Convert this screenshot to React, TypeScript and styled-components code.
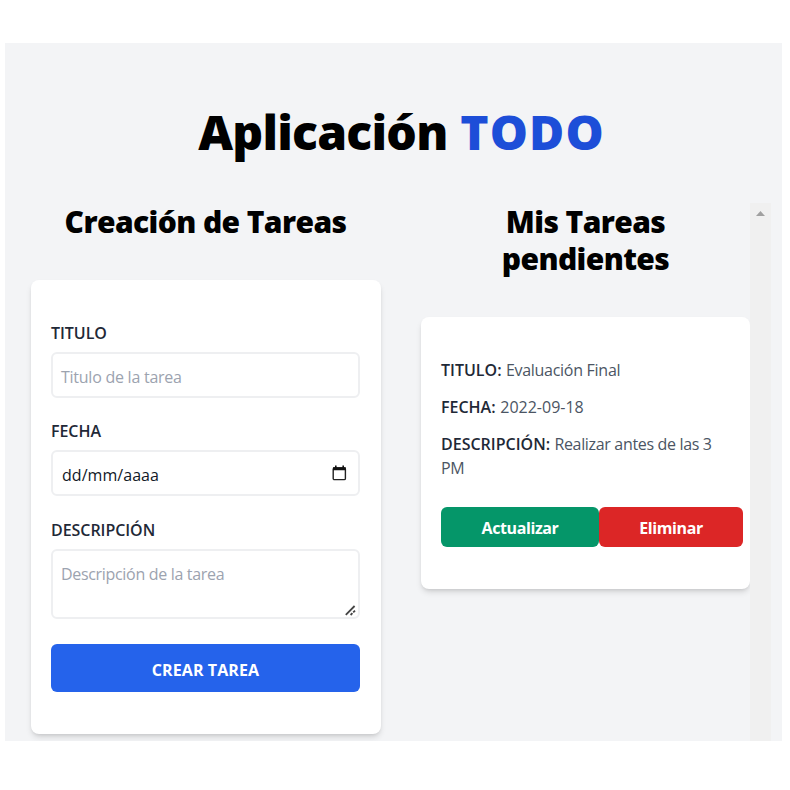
import React from "react";
import styled, { createGlobalStyle } from "styled-components";

const GlobalStyle = createGlobalStyle`
  *, *::before, *::after { box-sizing: border-box; }
  body {
    margin: 0;
    background: #ffffff;
    font-family: "Open Sans", "Noto Sans", sans-serif;
    font-size: 16px;
    line-height: 24px;
    color: #1f2937;
  }
  h1, h2, p { margin: 0; }
`;

const Page = styled.div`
  height: 790px;
  padding: 43px 8px 49px 5px;
  overflow: hidden;
`;

const Panel = styled.main`
  height: 698px;
  padding-top: 64px;
  background: #f3f4f6;
  overflow: hidden;
`;

const Title = styled.h1`
  height: 96px;
  padding-left: 16px;
  text-align: center;
  font-size: 48px;
  line-height: 49px;
  font-weight: 800;
  letter-spacing: -0.75px;
  color: #000;
  white-space: nowrap;

  span {
    margin-left: 1px;
    color: #1d4ed8;
    letter-spacing: 1.1px;
  }
`;

const Columns = styled.div`
  display: flex;
  align-items: flex-start;
`;

const FormColumn = styled.section`
  width: 350px;
  margin-left: 25.5px;
`;

const ListColumn = styled.section`
  display: flex;
  width: 350px;
  height: 538px;
  margin-left: 40.5px;
`;

const List = styled.div`
  width: 329px;
`;

const Heading = styled.h2<{ $spacing: string }>`
  padding-top: 1px;
  margin-bottom: 39.5px;
  text-align: center;
  font-size: 30px;
  line-height: 36.5px;
  font-weight: 800;
  letter-spacing: ${(p) => p.$spacing};
  color: #000;
`;

const Card = styled.div<{ $height: number; $inset: number }>`
  height: ${(p) => p.$height}px;
  padding: 41px ${(p) => p.$inset}px 0;
  border-radius: 8px;
  background: #fff;
  box-shadow: 0 4px 6px -1px rgba(0, 0, 0, 0.13), 0 2px 4px -2px rgba(0, 0, 0, 0.13);
`;

const Field = styled.div<{ $height: number }>`
  height: ${(p) => p.$height}px;
`;

const Label = styled.label`
  display: block;
  height: 31px;
  font-weight: 650;
  letter-spacing: -0.05px;
  color: #1f2937;
`;

const Control = styled.div<{ $height: number; $filled?: boolean }>`
  display: flex;
  justify-content: space-between;
  align-items: flex-start;
  height: ${(p) => p.$height}px;
  padding: ${(p) => (p.$filled ? "11px 11px 0 9px" : "11px 2px 0 8px")};
  border: 2px solid #eeeff1;
  border-radius: 6px;
  color: ${(p) => (p.$filled ? "#111827" : "#9ca3af")};
  background: #fff;
`;

const ControlText = styled.span<{ $spacing: string }>`
  letter-spacing: ${(p) => p.$spacing};
  line-height: 24px;
  white-space: nowrap;
`;

const Submit = styled.button`
  display: block;
  width: 100%;
  height: 48px;
  padding: 3px 0 0;
  border: 0;
  border-radius: 6px;
  background: #2563eb;
  color: #fff;
  font: 700 16px/24px "Open Sans", "Noto Sans", sans-serif;
  letter-spacing: 0.1px;
`;

const Detail = styled.p<{ $spacing: string }>`
  margin-bottom: 13px;
  font-size: 16px;
  line-height: 24.3px;
  letter-spacing: ${(p) => p.$spacing};
  color: #4b5563;
`;

const Term = styled.strong`
  margin-right: 0.5px;
  font-weight: 650;
  letter-spacing: 0;
  color: #1f2937;
`;

const Actions = styled.div`
  display: flex;
  margin-top: 26.4px;
`;

const Action = styled.button<{ $width: number; $color: string }>`
  flex: none;
  width: ${(p) => p.$width}px;
  height: 40px;
  padding: 2px 0 0;
  border: 0;
  border-radius: 6px;
  background: ${(p) => p.$color};
  color: #fff;
  font: 700 16px/24px "Open Sans", "Noto Sans", sans-serif;
  letter-spacing: -0.4px;
`;

const Scrollbar = styled.div`
  width: 21px;
  height: 538px;
  padding: 8px 0 0 6px;
  background: #f0f0f0;

  svg { display: block; }
`;

const CalendarIcon = styled.svg`
  flex: none;
  margin-top: 2px;
`;

const Grip = styled.svg`
  flex: none;
  align-self: flex-end;
  margin-bottom: 1px;
`;

export default function App() {
  return (
    <>
      <GlobalStyle />
      <Page>
        <Panel>
          <Title>
            Aplicación <span>TODO</span>
          </Title>
          <Columns>
            <FormColumn>
              <Heading $spacing="-0.6px">Creación de Tareas</Heading>
              <Card $height={454} $inset={20.5}>
                <Field $height={98}>
                  <Label>TITULO</Label>
                  <Control $height={46}>
                    <ControlText $spacing="-0.25px">Titulo de la tarea</ControlText>
                  </Control>
                </Field>
                <Field $height={99}>
                  <Label>FECHA</Label>
                  <Control $height={46} $filled>
                    <ControlText $spacing="0.05px">dd/mm/aaaa</ControlText>
                    <CalendarIcon width="15" height="16" viewBox="0 0 15 16">
                      <rect x="1.2" y="3" width="12.2" height="11.6" rx="1.2" fill="none" stroke="#222" strokeWidth="1.4" />
                      <path d="M1 2.3h12.8v3H1zM3 .6h1.6v2.4H3zM10.4.6H12v2.4h-1.6z" fill="#111" />
                    </CalendarIcon>
                  </Control>
                </Field>
                <Field $height={126}>
                  <Label>DESCRIPCIÓN</Label>
                  <Control $height={70}>
                    <ControlText $spacing="-0.32px">Descripción de la tarea</ControlText>
                    <Grip width="11" height="11" viewBox="0 0 11 11">
                      <path
                        d="M.8 9.8 9.6 1M5.6 10 7.4 8.2M8.2 7.4 10 5.6"
                        fill="none"
                        stroke="#444"
                        strokeWidth="1.8"
                      />
                    </Grip>
                  </Control>
                </Field>
                <Submit>CREAR TAREA</Submit>
              </Card>
            </FormColumn>
            <ListColumn>
              <List>
                <Heading $spacing="-0.6px">
                  Mis Tareas
                  <br />
                  pendientes
                </Heading>
                <Card $height={272} $inset={20}>
                  <Detail $spacing="-0.28px">
                    <Term>TITULO:</Term> Evaluación Final
                  </Detail>
                  <Detail $spacing="0px">
                    <Term>FECHA:</Term> 2022-09-18
                  </Detail>
                  <Detail $spacing="-0.33px">
                    <Term>DESCRIPCIÓN:</Term> Realizar antes de las 3<br />
                    PM
                  </Detail>
                  <Actions>
                    <Action $width={158} $color="#059669">Actualizar</Action>
                    <Action $width={144} $color="#dc2626">Eliminar</Action>
                  </Actions>
                </Card>
              </List>
              <Scrollbar>
                <svg width="9" height="5" viewBox="0 0 9 5">
                  <path d="M0 5 4.5 0 9 5z" fill="#a0a0a0" />
                </svg>
              </Scrollbar>
            </ListColumn>
          </Columns>
        </Panel>
      </Page>
    </>
  );
}
